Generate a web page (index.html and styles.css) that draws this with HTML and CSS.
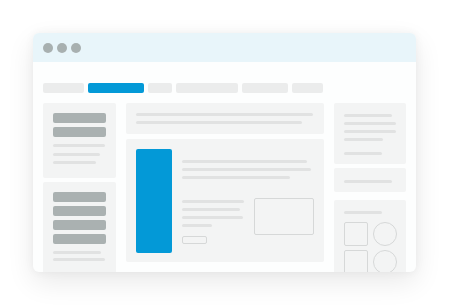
FILE: index.html
```
<!DOCTYPE html>
<html>
<head>
<meta charset="utf-8">
<link rel="stylesheet" href="styles.css">
</head>
<body>
<div class="stage">
  <div class="window">
    <div class="titlebar">
      <span class="dot"></span><span class="dot"></span><span class="dot"></span>
    </div>
    <div class="tabs">
      <span class="tab w41"></span>
      <span class="tab active w56"></span>
      <span class="tab w24"></span>
      <span class="tab w61"></span>
      <span class="tab w46"></span>
      <span class="tab w31"></span>
    </div>
    <div class="columns">
      <div class="col left">
        <div class="card lcard1">
          <div class="bar"></div>
          <div class="bar"></div>
          <div class="lines lgap">
            <div class="line l52"></div>
            <div class="line l47"></div>
            <div class="line l43"></div>
          </div>
        </div>
        <div class="card lcard2">
          <div class="bar"></div>
          <div class="bar"></div>
          <div class="bar"></div>
          <div class="bar"></div>
          <div class="lines lgap2">
            <div class="line l48"></div>
            <div class="line l52"></div>
          </div>
        </div>
      </div>
      <div class="col middle">
        <div class="card mtop">
          <div class="line l177"></div>
          <div class="line l166"></div>
        </div>
        <div class="card mmain">
          <div class="hero"></div>
          <div class="mbody">
            <div class="lines">
              <div class="line l125"></div>
              <div class="line l129"></div>
              <div class="line l108"></div>
            </div>
            <div class="lower">
              <div class="lowerleft">
                <div class="lines">
                  <div class="line l62"></div>
                  <div class="line l58"></div>
                  <div class="line l61"></div>
                  <div class="line l30"></div>
                </div>
                <div class="btn"></div>
              </div>
              <div class="box"></div>
            </div>
          </div>
        </div>
      </div>
      <div class="col right">
        <div class="card rcard1">
          <div class="lines">
            <div class="line l48"></div>
            <div class="line l52"></div>
            <div class="line l52"></div>
            <div class="line l39"></div>
          </div>
          <div class="line rsep l38"></div>
        </div>
        <div class="card rcard2">
          <div class="line l48"></div>
        </div>
        <div class="card rcard3">
          <div class="line l38"></div>
          <div class="shapes">
            <span class="sq"></span><span class="circ"></span>
            <span class="sq"></span><span class="circ"></span>
          </div>
        </div>
      </div>
    </div>
  </div>
</div>
</body>
</html>
```
FILE: styles.css
```
html, body {
  margin: 0;
  padding: 0;
  background: #ffffff;
  font-family: "Liberation Sans", Arial, sans-serif;
}
.stage {
  width: 449px;
  height: 305px;
  padding: 33px 0 0 33px;
  box-sizing: border-box;
}
.window {
  width: 383px;
  height: 239px;
  border-radius: 6px;
  overflow: hidden;
  background: #fdfefe;
  box-shadow: 0 10px 28px rgba(0, 0, 0, 0.09), 0 0 10px rgba(0, 0, 0, 0.05);
}
.titlebar {
  height: 29px;
  background: #e8f5fa;
  display: flex;
  align-items: center;
  gap: 4px;
  padding-left: 10px;
  box-sizing: border-box;
}
.dot {
  width: 10px;
  height: 10px;
  border-radius: 50%;
  background: #a8b0b0;
}
.tabs {
  margin-top: 21px;
  padding: 0 10px;
  display: flex;
  gap: 4px;
  height: 10px;
}
.tab {
  height: 10px;
  border-radius: 2px;
  background: #ebecec;
}
.tab.active { background: #0399d7; }
.w41 { width: 41px; }
.w56 { width: 56px; }
.w24 { width: 24px; }
.w61 { width: 62px; }
.w46 { width: 46px; }
.w31 { width: 31px; }
.columns {
  margin-top: 10px;
  padding: 0 10px;
  display: flex;
  gap: 10px;
  align-items: flex-start;
}
.col {
  display: flex;
  flex-direction: column;
}
.left { width: 73px; gap: 4px; }
.middle { width: 198px; gap: 5px; }
.right { width: 72px; }
.card {
  background: #f3f4f4;
  border-radius: 2px;
  box-sizing: border-box;
}
.bar {
  width: 53px;
  height: 10px;
  border-radius: 2px;
  background: #aab1b1;
  margin-bottom: 4px;
}
.line {
  height: 3px;
  border-radius: 2px;
  background: #e1e2e2;
}
.l30 { width: 30px; }
.l38 { width: 38px; }
.l39 { width: 39px; }
.l43 { width: 43px; }
.l47 { width: 47px; }
.l48 { width: 48px; }
.l52 { width: 52px; }
.l58 { width: 58px; }
.l61 { width: 61px; }
.l62 { width: 62px; }
.l108 { width: 108px; }
.l125 { width: 125px; }
.l129 { width: 129px; }
.l166 { width: 166px; }
.l177 { width: 177px; }
.lines {
  display: flex;
  flex-direction: column;
  gap: 5px;
}
.lcard1 {
  height: 75px;
  padding: 10px 0 0 10px;
}
.lgap { margin-top: 7px; gap: 5.5px; }
.lcard2 {
  height: 110px;
  padding: 10px 0 0 10px;
}
.lgap2 { margin-top: 7px; gap: 4px; }
.mtop {
  height: 31px;
  padding: 10px 0 0 10px;
  display: flex;
  flex-direction: column;
  gap: 5px;
}
.mmain {
  height: 123px;
  padding: 10px 0 0 10px;
  display: flex;
  gap: 10px;
}
.hero {
  width: 36px;
  height: 104px;
  border-radius: 2px;
  background: #0399d7;
}
.mbody {
  padding-top: 11px;
}
.lower {
  margin-top: 19px;
  display: flex;
  gap: 10px;
  align-items: flex-start;
}
.lowerleft {
  width: 62px;
  padding-top: 2px;
}
.btn {
  margin-top: 9px;
  width: 23px;
  height: 6px;
  border: 1px solid #d6d8d8;
  border-radius: 2px;
}
.box {
  width: 58px;
  height: 35px;
  border: 1px solid #d6d8d8;
  border-radius: 2px;
}
.rcard1 {
  height: 61px;
  padding: 11px 0 0 10px;
}
.rsep { margin-top: 11px; }
.rcard2 {
  height: 24px;
  margin-top: 4px;
  padding: 12px 0 0 10px;
}
.rcard3 {
  height: 90px;
  margin-top: 8px;
  padding: 11px 0 0 10px;
}
.shapes {
  margin-top: 8px;
  display: grid;
  grid-template-columns: 24px 24px;
  column-gap: 5px;
  row-gap: 4px;
}
.sq {
  width: 24px;
  height: 24px;
  box-sizing: border-box;
  border: 1px solid #d6d8d8;
  border-radius: 2px;
}
.circ {
  width: 24px;
  height: 24px;
  box-sizing: border-box;
  border: 1px solid #d6d8d8;
  border-radius: 50%;
}
```
